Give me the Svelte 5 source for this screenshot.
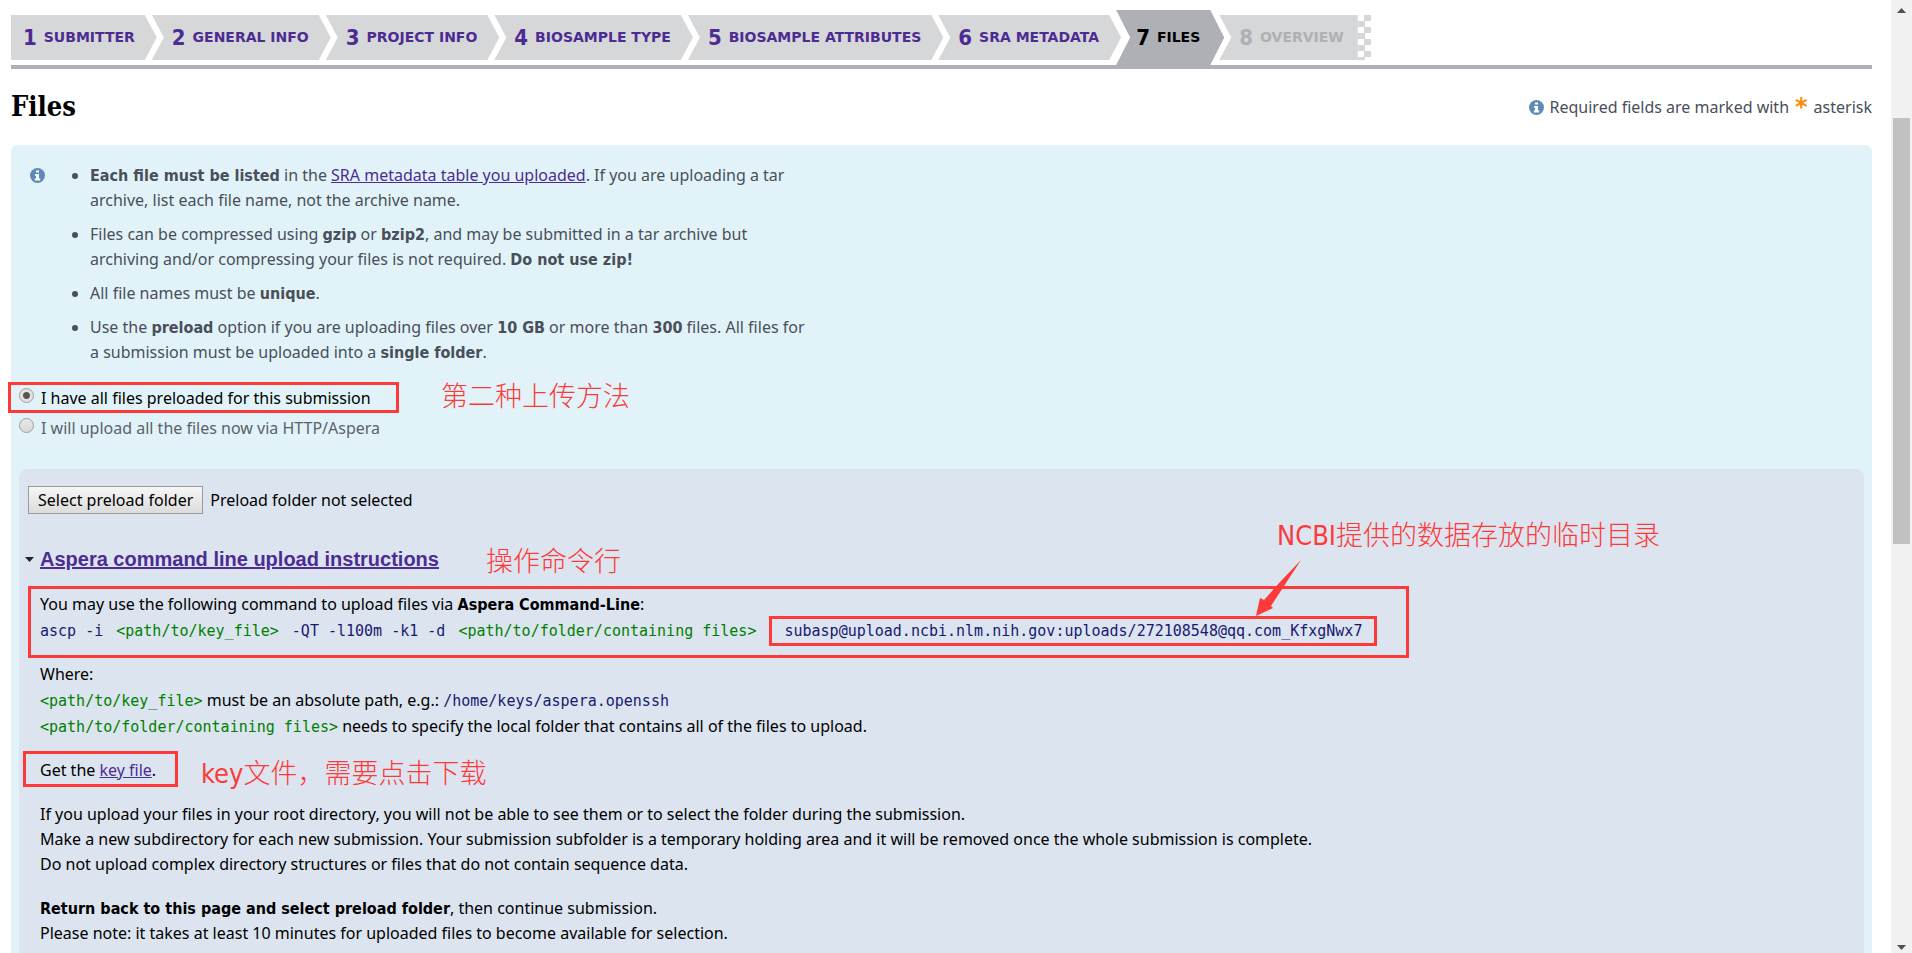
<script lang="ts">
  const steps = [
    'Submitter',
    'General info',
    'Project info',
    'BioSample type',
    'BioSample attributes',
    'SRA metadata',
    'Files',
    'Overview'
  ];
  const current = 7;

  let method = $state('preload');
</script>

{#snippet infoIcon()}
  <svg class="info" viewBox="0 0 15 15" aria-hidden="true">
    <circle cx="7.5" cy="7.5" r="7.5" fill="#5f8ab5" />
    <path d="M6 2.4h3v2.2H6zM5 6h4v4.6h1.2v1.8H4.8v-1.8H6V7.8H5z" fill="#fff" />
  </svg>
{/snippet}

<div class="window">
  <main>
    <nav aria-label="Submission steps">
      <ol class="steps">
        {#each steps as step, i}
          <li class:active={i + 1 === current} class:upcoming={i + 1 > current}>
            {#if i + 1 < current}
              <a href="#step"><b>{i + 1}</b>{step}</a>
            {:else}
              <span><b>{i + 1}</b>{step}</span>
            {/if}
          </li>
        {/each}
        <li class="checker" aria-hidden="true"></li>
      </ol>
    </nav>

    <header>
      <h1>Files</h1>
      <p>{@render infoIcon()}Required fields are marked with <span class="star">*</span> asterisk</p>
    </header>

    <section class="panel">
      <div class="hints">
        {@render infoIcon()}
        <ul>
          <li>
            <b>Each file must be listed</b> in the <a href="#sra">SRA metadata table you uploaded</a>. If you are
            uploading a tar archive, list each file name, not the archive name.
          </li>
          <li>
            Files can be compressed using <b>gzip</b> or <b>bzip2</b>, and may be submitted in a tar archive
            but<br />archiving and/or compressing your files is not required. <b>Do not use zip!</b>
          </li>
          <li>All file names must be <b>unique</b>.</li>
          <li>
            Use the <b>preload</b> option if you are uploading files over <b>10 GB</b> or more than <b>300</b> files.
            All files for a submission must be uploaded into a <b>single folder</b>.
          </li>
        </ul>
      </div>

      <div class="methods">
        <div class="method">
          <input type="radio" id="preload" name="method" value="preload" bind:group={method} />
          <label for="preload">I have all files preloaded for this submission</label>
          <div class="mark mark-method"></div>
          <span class="note note-method">第二种上传方法</span>
        </div>
        <div class="method">
          <input type="radio" id="http" name="method" value="http" bind:group={method} />
          <label for="http">I will upload all the files now via HTTP/Aspera</label>
        </div>
      </div>

      <div class="preload">
        <div class="folder">
          <button type="button">Select preload folder</button>
          <span>Preload folder not selected</span>
        </div>

        <h2>
          <svg class="caret" viewBox="0 0 9 5" aria-hidden="true"><path d="M0 0h9L4.5 5z" fill="#222" /></svg>
          <a href="#aspera">Aspera command line upload instructions</a>
          <span class="note note-command">操作命令行</span>
        </h2>

        <div class="instructions">
          <div class="block">
            <p>You may use the following command to upload files via <b>Aspera Command-Line</b>:</p>
            <p class="code-line">
              <code class="command">ascp -i <var>&lt;path/to/key_file&gt;</var> -QT -l100m -k1 -d <var>&lt;path/to/folder/containing files&gt;</var> <span class="target">subasp@upload.ncbi.nlm.nih.gov:uploads/272108548@qq.com_KfxgNwx7</span></code>
            </p>
            <div class="mark mark-command"></div>
            <span class="note note-target">NCBI提供的数据存放的临时目录</span>
            <svg class="arrow" viewBox="0 0 46 57" aria-hidden="true">
              <path d="M45 0L15 46L17 48L0 56L4 38L8 40L24 22Z" fill="#fd3a3a" />
            </svg>
          </div>
          <div class="block">
            <p>Where:</p>
            <p class="code-line"><code><var>&lt;path/to/key_file&gt;</var></code> must be an absolute path, e.g.: <code>/home/keys/aspera.openssh</code></p>
            <p class="code-line"><code><var>&lt;path/to/folder/containing files&gt;</var></code> needs to specify the local folder that contains all of the files to upload.</p>
          </div>
          <div class="block">
            <p>Get the <a href="#key">key file</a>.</p>
            <div class="mark mark-key"></div>
            <span class="note note-key">key文件，需要点击下载</span>
          </div>
          <div class="block">
            <p>If you upload your files in your root directory, you will not be able to see them or to select the folder during the submission.</p>
            <p>Make a new subdirectory for each new submission. Your submission subfolder is a temporary holding area and it will be removed once the whole submission is complete.</p>
            <p>Do not upload complex directory structures or files that do not contain sequence data.</p>
          </div>
          <div class="block">
            <p><b>Return back to this page and select preload folder</b>, then continue submission.</p>
            <p>Please note: it takes at least 10 minutes for uploaded files to become available for selection.</p>
          </div>
        </div>
      </div>
    </section>
  </main>

  <div class="scrollbar" aria-hidden="true">
    <svg viewBox="0 0 9 5"><path d="M0 5h9L4.5 0z" fill="#505050" /></svg>
    <div class="track"><div class="thumb"></div></div>
    <svg viewBox="0 0 9 5"><path d="M0 0h9L4.5 5z" fill="#505050" /></svg>
  </div>
</div>

<style>
  :global(body) {
    margin: 0;
    background: #fff;
  }

  .window {
    display: grid;
    grid-template-columns: minmax(0, 1fr) 21px;
    height: 100vh;
    font: 16px/25px 'Noto Sans', Tahoma, sans-serif;
    color: #000;
  }

  main {
    overflow: hidden;
    padding: 10px 19px 0 11px;
  }

  p,
  h1,
  h2,
  ul,
  ol {
    margin: 0;
    padding: 0;
  }

  a {
    color: #4c2c92;
  }

  b {
    font-family: 'DejaVu Sans Condensed', Tahoma, sans-serif;
  }

  .info {
    width: 15px;
    height: 15px;
    flex: none;
  }

  /* wizard steps */
  .steps {
    display: flex;
    align-items: center;
    height: 55px;
    border-bottom: 4px solid #aeb0b5;
    list-style: none;
    font: bold 14px/45px 'DejaVu Sans', Verdana, sans-serif;
    text-transform: uppercase;
    white-space: nowrap;
  }

  .steps li {
    height: 45px;
    margin-right: -5px;
    padding: 0 22px 0 20px;
    background: #d6d7d9;
    clip-path: polygon(0 0, calc(100% - 12px) 0, 100% 50%, calc(100% - 12px) 100%, 0 100%, 12px 50%);
  }

  .steps li:first-child {
    padding-left: 12px;
    clip-path: polygon(0 0, calc(100% - 12px) 0, 100% 50%, calc(100% - 12px) 100%, 0 100%);
  }

  .steps a,
  .steps span {
    display: flex;
    align-items: center;
    gap: 7px;
  }

  .steps a {
    color: #4c2c92;
    text-decoration: none;
  }

  .steps b {
    font-size: 22px;
  }

  .steps .active {
    height: 55px;
    line-height: 55px;
    padding-right: 24px;
    clip-path: polygon(0 0, calc(100% - 14px) 0, 100% 50%, calc(100% - 14px) 100%, 0 100%, 14px 50%);
    background: #aeb0b5;
  }

  .steps .upcoming {
    margin-right: 0;
    padding-right: 14px;
    clip-path: polygon(0 0, 100% 0, 100% 100%, 0 100%, 12px 50%);
    color: #aeb0b5;
  }

  .steps .checker {
    width: 13px;
    padding: 0;
    clip-path: none;
    background: repeating-conic-gradient(#d6d7d9 0 25%, #fff 0 50%) 0 0 / 13px 12px;
  }

  header {
    display: flex;
    align-items: center;
    justify-content: space-between;
    height: 76px;
    color: #494f5a;
  }

  header p {
    display: flex;
    align-items: center;
    gap: 6px;
  }

  h1 {
    font: bold 27px/32px 'DejaVu Serif Condensed', Georgia, serif;
    color: #000;
  }

  .star {
    font: bold 24px/25px 'DejaVu Sans', sans-serif;
    color: #ff8c00;
  }

  .panel {
    padding: 18px 8px 0;
    border-radius: 6px 6px 0 0;
    background: #e1f3f8;
  }

  .hints {
    display: flex;
    gap: 45px;
    padding: 0 11px;
    color: #494f5a;
  }

  .hints .info {
    margin-top: 5px;
  }

  .hints ul {
    display: grid;
    gap: 9px;
    max-width: 724px;
  }

  .methods {
    display: grid;
    gap: 5px;
    margin-top: 21px;
  }

  .method {
    position: relative;
    display: flex;
    gap: 7px;
    color: #5b616b;
  }

  .method:has(:checked) {
    color: #000;
  }

  input[type='radio'] {
    appearance: none;
    width: 15px;
    height: 15px;
    margin: 2px 0;
    border: 1px solid #a0a0a0;
    border-radius: 50%;
    background: linear-gradient(#e8e8e8, #d8d8d8);
  }

  input[type='radio']:checked {
    background: radial-gradient(circle, #555 0 3px, #e2e2e2 4px);
  }

  .preload {
    margin-top: 28px;
    padding: 17px 9px 40px;
    border-radius: 8px 8px 0 0;
    background: #dce4ef;
  }

  .folder {
    display: flex;
    align-items: center;
    gap: 7px;
  }

  button {
    height: 28px;
    padding: 0 9px;
    border: 1px solid #9a9a9a;
    background: linear-gradient(#f6f6f6, #dcdcdc);
    color: #000;
    font: inherit;
  }

  h2 {
    position: relative;
    margin: 33px 0 20px 12px;
    font: bold 20px/25px 'Liberation Sans', Arial, sans-serif;
  }

  .caret {
    position: absolute;
    left: -15px;
    top: 10px;
    width: 9px;
    height: 5px;
  }

  .instructions {
    display: grid;
    gap: 19px;
    padding-left: 12px;
  }

  .block {
    position: relative;
  }

  .code-line {
    line-height: 26px;
  }

  code {
    font-family: 'DejaVu Sans Mono', Consolas, monospace;
    font-size: 15px;
    line-height: 20px;
    color: #191970;
  }

  var {
    font-style: normal;
    color: #008000;
  }

  .command var {
    margin: 0 4px;
  }

  .target {
    padding: 3px 12px;
    border: 3px solid #fd3a3a;
  }

  /* red annotations lying over the page */
  .mark {
    position: absolute;
    box-sizing: border-box;
    border: 3px solid #fd3a3a;
    pointer-events: none;
  }

  .mark-method {
    left: -11px;
    top: -4px;
    width: 391px;
    height: 31px;
  }

  .mark-command {
    left: -12px;
    top: -6px;
    width: 1381px;
    height: 72px;
  }

  .mark-key {
    left: -17px;
    top: -7px;
    width: 155px;
    height: 36px;
  }

  .note {
    position: absolute;
    font: 300 27px/32px 'DejaVu Sans Condensed', 'Noto Sans CJK SC', sans-serif;
    color: #fd3a3a;
    white-space: nowrap;
  }

  .note-method {
    left: 422px;
    top: -5px;
  }

  .note-command {
    left: 446px;
    top: -1px;
  }

  .note-target {
    left: 1237px;
    top: -72px;
  }

  .note-key {
    left: 161px;
    top: 0;
  }

  .arrow {
    position: absolute;
    left: 1216px;
    top: -32px;
    width: 46px;
    height: 57px;
  }

  .scrollbar {
    display: flex;
    flex-direction: column;
    align-items: center;
    background: #f1f1f1;
  }

  .scrollbar svg {
    width: 9px;
    height: 5px;
    margin: 8px 0 3px;
  }

  .scrollbar .track {
    flex: 1;
    width: 17px;
    padding-top: 102px;
  }

  .scrollbar .thumb {
    height: 52%;
    background: #c1c1c1;
  }
</style>
